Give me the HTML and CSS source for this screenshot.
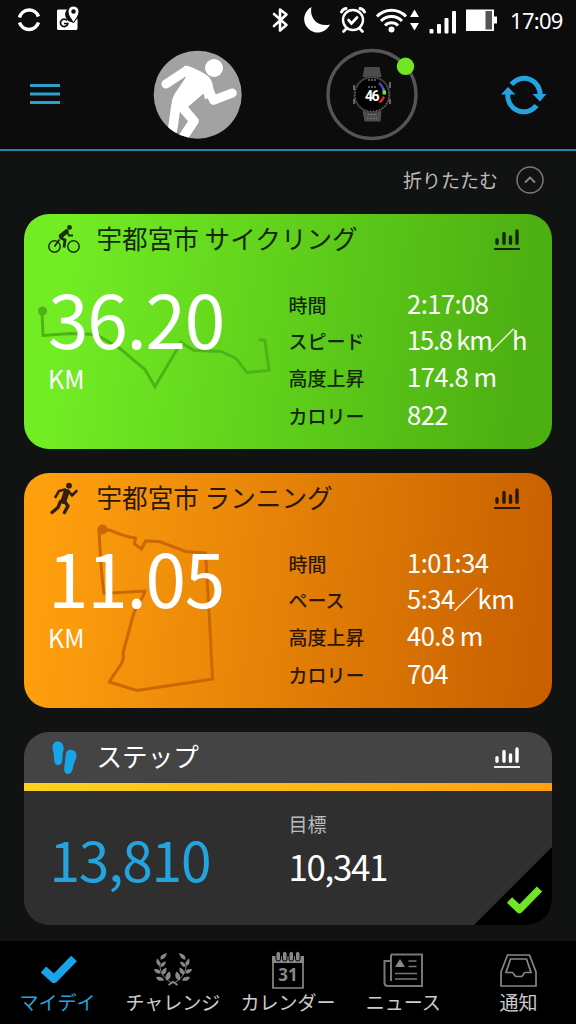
FILE: index.html
```html
<!DOCTYPE html>
<html lang="ja">
<head>
  <meta charset="UTF-8">
  <meta name="viewport" content="width=device-width, initial-scale=1.0"/>
  <title>マイデイ</title>
  <link rel="stylesheet" href="styles.css">
</head>
<body>
  <div class="status-bar">
    <svg class="status-left" width="64" height="32" viewBox="16 4 64 32">
      <path d="M19.500 17.500a10 10 0 0 1 19-1M38.500 22.500a10 10 0 0 1-19 0" fill="none" stroke="#fff" stroke-width="3.500"/>
      <path d="M59 9.500h8a8 8 0 0 0 6 13l4.500-4v10a1.500 1.500 0 0 1-1.500 1.500H58.500a1.500 1.500 0 0 1-1.500-1.500V11a1.500 1.500 0 0 1 2-1.500z" fill="#fff"/>
      <path d="M73.500 23c-2-4-5.500-7-5.500-11.500a5.500 5.500 0 0 1 11 0c0 4.500-3.500 7.500-5.500 11.500z" fill="#fff" stroke="#0c0c0c" stroke-width="1"/>
      <circle cx="73.500" cy="11.500" r="2.200" fill="#0c0c0c"/>
      <path d="M67 20.500a3.700 3.700 0 1 0 .8 3H64" fill="none" stroke="#0c0c0c" stroke-width="1.700"/>
    </svg>
    <svg class="status-right" width="230" height="36" viewBox="268 3 230 36">
      <path d="M273 14l12.500 11-6.500 5.500v-21l6.500 5L273 26" fill="none" stroke="#fff" stroke-width="2.600" stroke-linejoin="round" stroke-linecap="round"/>
      <path d="M310.500 7a13.500 13.500 0 1 0 18.500 17.500c-12 3-21-6.500-18.500-17.500z" fill="#fff"/>
      <g fill="none" stroke="#fff" stroke-width="2.400" stroke-linecap="round">
        <circle cx="352" cy="20" r="10"/>
        <path d="M347.500 20l3 3.500 5.500-6M345.500 28.500l-3 3M358.500 28.500l3 3" stroke-width="2.700"/>
        <path d="M340.500 12a6 6 0 0 1 4.500-3.500M363.500 12a6 6 0 0 0-4.500-3.500" stroke-width="3"/>
      </g>
      <g fill="none" stroke="#fff" stroke-width="3">
        <path d="M376 16.500a20 20 0 0 1 29 0M380 21a14.500 14.500 0 0 1 21 0M384 25.500a9 9 0 0 1 13 0"/>
      </g>
      <circle cx="390.500" cy="29.500" r="3" fill="#fff"/>
      <path d="M413.500 9.500l4.500 7.500h-9zM413.500 30.500l4.500-7.500h-9z" fill="#fff"/>
      <g fill="#fff">
        <rect x="428.500" y="29" width="4" height="4.500" rx="1"/>
        <rect x="436" y="24" width="4" height="9.500" rx="1"/>
        <rect x="443.500" y="18" width="4" height="15.500" rx="1"/>
        <rect x="451" y="11" width="4" height="22.500" rx="1"/>
        <path d="M465 9.500h28v7h3v7h-3V31h-28z"/>
      </g>
      <rect x="484.500" y="11" width="6.500" height="18.500" fill="#555"/>
    </svg>
    <span class="clock">17:09</span>
  </div>

  <header class="top-bar">
    <svg class="menu" width="32" height="24" viewBox="29 82 32 24">
      <path d="M30 85.500h30M30 94h30M30 102.500h30" stroke="#319fce" stroke-width="3"/>
    </svg>
    <svg class="avatar" width="90" height="90" viewBox="153 50 90 90">
      <defs><clipPath id="face"><circle cx="197.700" cy="94.700" r="44"/></clipPath></defs>
      <circle cx="197.700" cy="94.700" r="44" fill="#a2a2a2"/>
      <g clip-path="url(#face)" fill="none" stroke="#fff" stroke-width="9" stroke-linecap="round" stroke-linejoin="round">
        <circle cx="214" cy="68" r="9" fill="#fff" stroke="none"/>
        <path d="M166 84l20.500-13.500"/>
        <path d="M184 66.300c2-.8 4-.5 6 .5 7 2.500 13 5.500 17.500 9 4 3.500 5.500 8 5.700 12.500l.8 8-9 3-1.500-5.800-14.500 12.500-7 8-9.700-13.500c.5-3 1.500-6 4-9l9.700-14.500-4-2z" fill="#fff" stroke="none"/>
        <path d="M209 90l4.500 10.300 18.800-7.300"/>
        <path d="M177 101c-2 7-2.500 19-5 31" stroke-width="9.500"/>
        <path d="M182 107l12 14-12 18" stroke-width="9.500"/>
      </g>
    </svg>
    <svg class="device" width="96" height="96" viewBox="325 47 96 96">
      <circle cx="372" cy="94.500" r="44" fill="none" stroke="#555" stroke-width="3.300"/>
      <path d="M364.500 67h15l2 10h-19zM362.500 111h19l-1 10.500h-16z" fill="#4c4c4c"/>
      <path d="M368 114.500h8M367 118.500h10" stroke="#858585" stroke-width="1" stroke-dasharray="1.500 1.500"/>
      <circle cx="372" cy="94.500" r="18.500" fill="#3a3a3a"/>
      <path d="M354 85v5M354 99v5M390 82v6M390 99v5" stroke="#666" stroke-width="2"/>
      <circle cx="372" cy="94.500" r="16.800" fill="#020202" stroke="#999" stroke-width="1" stroke-dasharray="1 2"/>
      <path d="M368 80h9M368 87h8" stroke="#aaa" stroke-width="1" stroke-dasharray="2 1"/>
      <path d="M379 83a13 13 0 0 1 4 5" fill="none" stroke="#603fc8" stroke-width="2.400"/>
      <path d="M383 88a13 13 0 0 1 1 4" fill="none" stroke="#2785d9" stroke-width="2.400"/>
      <path d="M384.300 90.500v4" stroke="#73e626" stroke-width="3.500"/>
      <path d="M384 96.500a13 13 0 0 1-4.500 6" fill="none" stroke="#d52b25" stroke-width="2.400"/>
      <text x="371.500" y="100.500" class="watch-num">46</text>
      <circle cx="405.500" cy="66.300" r="8.700" fill="#70e624"/>
    </svg>
    <svg class="sync" width="48" height="42" viewBox="500 74 48 42">
      <g fill="none" stroke="#24a3df" stroke-width="5">
        <path d="M511.500 84.500A16 16 0 0 1 540 96"/>
        <path d="M536.500 105.500A16 16 0 0 1 508 93"/>
      </g>
      <path d="M532.500 94h14l-6.500 7.500zM501 94.500h14.500l-7.500-7.500z" fill="#24a3df"/>
    </svg>
  </header>

  <main class="day">
    <div class="collapse">
      <span>折りたたむ</span>
      <svg width="28" height="28" viewBox="0 0 28 28">
        <circle cx="14" cy="14" r="13" fill="none" stroke="#777" stroke-width="1.500"/>
        <path d="M9 16.500l5-5 5 5" fill="none" stroke="#888" stroke-width="1.800"/>
      </svg>
    </div>

    <section class="card cycling">
      <svg class="route" width="528" height="235" viewBox="24 213.500 528 235">
        <circle cx="42.500" cy="310.500" r="4.500" fill="#4eb416"/>
        <path d="M42 311l1 24 28-2 25 1 24 14 25 21 10 17 26-44 13 8 27 1 15 7 11 14 22-2-4-30-6-1" fill="none" stroke="#4eb416" stroke-width="3"/>
      </svg>
      <div class="card-head">
        <svg class="card-icon" width="34" height="30" viewBox="47 223 34 30">
          <circle cx="54.500" cy="245.500" r="5.700" fill="none" stroke="#1a2d0e" stroke-width="1.500"/>
          <circle cx="73.500" cy="245.500" r="5.700" fill="none" stroke="#1a2d0e" stroke-width="1.500"/>
          <circle cx="69.500" cy="226.500" r="2.400" fill="#1a2d0e"/>
          <path d="M61 235l5.500-4.500" fill="none" stroke="#1a2d0e" stroke-width="4.500" stroke-linecap="round"/>
          <path d="M60 236.500l5 2.500-1 7.500" fill="none" stroke="#1a2d0e" stroke-width="2.800"/>
          <path d="M67 231l2 3.500h4M54.500 245.500l5-7" fill="none" stroke="#1a2d0e" stroke-width="1.800"/>
        </svg>
        <h2>宇都宮市 サイクリング</h2>
        <svg class="chart" width="26" height="24" viewBox="0 0 26 24">
          <path d="M3 16.200v-3.500M10 16.200V6.500M16.500 16.200V10M23 16.200V4"/>
          <path d="M0 22h26" class="chart-base"/>
        </svg>
      </div>
      <div class="card-body">
        <div class="distance">
          <div class="big">36.20</div>
          <div class="unit">KM</div>
        </div>
        <dl class="stats">
          <dt>時間</dt><dd>2:17:08</dd>
          <dt>スピード</dt><dd class="speed">15.8 km<span class="slash">／</span>h</dd>
          <dt>高度上昇</dt><dd>174.8 m</dd>
          <dt>カロリー</dt><dd>822</dd>
        </dl>
      </div>
    </section>

    <section class="card running">
      <svg class="route" width="528" height="235" viewBox="24 473 528 235">
        <circle cx="102.500" cy="529.500" r="5" fill="#cb6804"/>
        <path d="M99 529c1 22 2 44 5 64.500l41-2.500c-2 8-10 16-12 25l-10 37c3 10-8 17-13.500 29l27.500 8.500 50-7.500 25.500-4-3-60-4-66-20-1.500-26-10-14-.5-4 8-7-5 1-6c-10-1-19-5-26-8l-10 1" fill="none" stroke="#cb6804" stroke-width="3"/>
      </svg>
      <div class="card-head">
        <svg class="card-icon" width="34" height="34" viewBox="47 480 34 34">
          <circle cx="69" cy="484.700" r="2.900" fill="#30200c"/>
          <g fill="none" stroke="#30200c" stroke-linecap="round" stroke-linejoin="round">
            <path d="M66.500 491l-3 9" stroke-width="6"/>
            <path d="M65 488.500l-6 1.500-3.500 6M68.500 490l3.500 4.500 4.500-4.500" stroke-width="2.600"/>
            <path d="M65 501l3 4-3.500 6.500M60.500 500.500l-2.500 6-6 5" stroke-width="3.400"/>
          </g>
        </svg>
        <h2>宇都宮市 ランニング</h2>
        <svg class="chart" width="26" height="24" viewBox="0 0 26 24">
          <path d="M3 16.200v-3.500M10 16.200V6.500M16.500 16.200V10M23 16.200V4"/>
          <path d="M0 22h26" class="chart-base"/>
        </svg>
      </div>
      <div class="card-body">
        <div class="distance">
          <div class="big">11.05</div>
          <div class="unit">KM</div>
        </div>
        <dl class="stats">
          <dt>時間</dt><dd>1:01:34</dd>
          <dt>ペース</dt><dd>5:34<span class="slash">／</span>km</dd>
          <dt>高度上昇</dt><dd>40.8 m</dd>
          <dt>カロリー</dt><dd>704</dd>
        </dl>
      </div>
    </section>

    <section class="card steps">
      <div class="card-head">
        <svg class="card-icon" width="34" height="34" viewBox="47 740 34 34">
          <path d="M52.500 747c0-7 10-7.500 11 0 .6 4-1.200 5-1 9 .3 3-.2 9-4.200 9s-4.300-4-4.300-8c0-4-1.500-6-1.500-10z" fill="#18a5e8"/>
          <path d="M65.800 754c1-6.500 10.700-5 10.700 1.500 0 4-2.500 6-3 10-.5 3.500-2 8.500-5.500 8.500-4.500-.5-4-5.500-3.500-8.500.8-4 .8-7 1.300-11.500z" fill="#18a5e8"/>
        </svg>
        <h2>ステップ</h2>
        <svg class="chart" width="26" height="24" viewBox="0 0 26 24">
          <path d="M3 16.200v-3.500M10 16.200V6.500M16.500 16.200V10M23 16.200V4"/>
          <path d="M0 22h26" class="chart-base"/>
        </svg>
      </div>
      <div class="progress"></div>
      <div class="steps-body">
        <div class="step-count">13,810</div>
        <div class="goal">
          <div class="goal-label">目標</div>
          <div class="goal-value">10,341</div>
        </div>
      </div>
      <svg class="done" width="78" height="78" viewBox="474 847 78 78">
        <path d="M552 847v78h-78z" fill="#000"/>
        <path d="M509.500 900l10 9.500 20-20.500" fill="none" stroke="#70e624" stroke-width="7.500" stroke-linejoin="round"/>
      </svg>
    </section>
  </main>

  <nav class="tabs">
    <a class="tab active">
      <svg width="40" height="38" viewBox="38 951 40 38">
        <path d="M43.500 969.500l10.500 9.500 20-20.500" fill="none" stroke="#18a5e8" stroke-width="8" stroke-linejoin="round"/>
      </svg>
      <span>マイデイ</span>
    </a>
    <a class="tab">
      <svg width="40" height="38" viewBox="153 951 40 38">
        <defs>
          <g id="branch">
            <path d="M160 962c-1 9 3 16 12 21" fill="none" stroke="#888" stroke-width="1"/>
            <path d="M160.500 959.500c-.5-4 2-5.500 6.500-6.500-1 4-3 6.500-6.500 6.500zM159.500 966c-3.500-2-3.500-4.500-2.500-7.500 2.500 2 4.500 4.500 2.500 7.500zM160.500 967c0-4 2-5 5.500-5.500-.5 3.500-2.500 5.500-5.500 5.500zM160.500 973.500c-4 .5-6-2-6.500-4.500 4 0 6.500.5 6.500 4.500zM162 974.500c-1-4 1.500-6 4.500-7 .5 4-1 7-4.500 7zM164 980.500c-4 1-7 0-8-3.500 4-1 7.500 0 8 3.500zM166 980.500c-1-5 .5-7 3.500-9 2.500 4 1 8-3.500 9z" fill="#888"/>
            <path d="M168.500 985l5-3.500" stroke="#888" stroke-width="2"/>
          </g>
        </defs>
        <use href="#branch"/>
        <use href="#branch" transform="translate(346 0) scale(-1 1)"/>
      </svg>
      <span>チャレンジ</span>
    </a>
    <a class="tab">
      <svg width="40" height="38" viewBox="268 951 40 38">
        <path d="M273 957h30v31h-30z" fill="none" stroke="#888" stroke-width="1.700"/>
        <path d="M272 956h32v7h-32z" fill="#888"/>
        <g fill="#888" stroke="#000" stroke-width="1">
          <rect x="276" y="951.500" width="4.500" height="9.500" rx="2"/>
          <rect x="282.500" y="951.500" width="4.500" height="9.500" rx="2"/>
          <rect x="289" y="951.500" width="4.500" height="9.500" rx="2"/>
          <rect x="295.500" y="951.500" width="4.500" height="9.500" rx="2"/>
        </g>
        <text x="288" y="981" class="cal-num">31</text>
      </svg>
      <span>カレンダー</span>
    </a>
    <a class="tab">
      <svg width="40" height="38" viewBox="383 951 40 38">
        <g fill="none" stroke="#777" stroke-width="2">
          <path d="M391 954.500h31V986h-34c-2 0-3.500-1-3.500-3v-22h6.500v20"/>
          <path d="M391 954.500V981" />
          <path d="M408.500 961h8M408.500 966.500h8M395 973.500h22M395 979h22" stroke-width="1.600"/>
        </g>
        <path d="M395 967l5-8 5 8z" fill="#888"/>
      </svg>
      <span>ニュース</span>
    </a>
    <a class="tab">
      <svg width="40" height="38" viewBox="498 951 40 38">
        <g fill="none" stroke="#888" stroke-width="1.700">
          <path d="M501 972l6.500-17h22l6.500 17v14h-35z"/>
          <path d="M506 972.500l4.500-13.500h16l4.500 13.500h-6c-1.500 0-1.500 4-4 4h-4.500c-2.500 0-2.500-4-4.500-4z"/>
        </g>
      </svg>
      <span>通知</span>
    </a>
  </nav>
</body>
</html>
```

FILE: styles.css
```css
:root {
  --bg-color: #0c0c0c;
  --panel-color: #111212;
  --accent-color: #24a3df;
}

* {
  box-sizing: border-box;
  font-family: 'Noto Sans CJK JP', 'Noto Sans', sans-serif;
}

body {
  margin: 0;
  width: 576px;
  height: 1024px;
  background-color: var(--bg-color);
  color: #ffffff;
  display: flex;
  flex-direction: column;
  overflow: hidden;
}

svg {
  display: block;
  flex: none;
}

.status-bar {
  height: 40px;
  display: flex;
  align-items: flex-start;
  padding: 3px 12px 0 16px;
}

.status-left {
  margin-top: 1px;
}

.status-right {
  margin-left: auto;
}

.clock {
  font-family: 'Noto Sans', sans-serif;
  font-size: 22px;
  line-height: 34px;
  width: 54px;
  margin-left: 11px;
  letter-spacing: -0.7px;
  white-space: nowrap;
}

.top-bar {
  height: 111px;
  border-bottom: 2px solid #2a80a5;
  display: flex;
  align-items: flex-start;
  justify-content: space-between;
  padding: 7px 28px 0 29px;
}

.menu {
  margin-top: 35px;
}

.avatar {
  margin: 3px 0 0 13px;
}

.device {
  margin-left: 3px;
}

.sync {
  margin-top: 27px;
}

.watch-num {
  font-family: 'Roboto', sans-serif;
  font-size: 14px;
  font-weight: bold;
  fill: #ffffff;
  text-anchor: middle;
  letter-spacing: -1.5px;
}

.day {
  background-color: var(--panel-color);
  height: 790px;
  padding: 0 24px;
}

.collapse {
  height: 62.5px;
  display: flex;
  align-items: center;
  justify-content: flex-end;
  gap: 18px;
  padding: 0 8px 5px 0;
  font-size: 19px;
  color: #bbbbbb;
}

.card {
  position: relative;
  height: 235px;
  border-radius: 25px;
  overflow: hidden;
  margin-bottom: 24px;
}

.cycling {
  background: linear-gradient(97deg, #72ed24 8%, #4caf12 94%);
  color: #132808;
}

.running {
  background: linear-gradient(97deg, #ffa00e 4%, #c86000 97%);
  color: #2b1804;
}

.route {
  position: absolute;
  top: 0;
  left: 0;
}

.card-head {
  position: relative;
  display: flex;
  align-items: center;
  height: 51px;
  padding: 0 32px 1px 23px;
}

.card-icon {
  margin-right: 15.5px;
}

.card-head h2 {
  flex: 1;
  margin: 0;
  font-size: 25.6px;
  font-weight: normal;
  line-height: 48px;
  padding-bottom: 2px;
}

.chart path {
  fill: none;
  stroke: currentColor;
  stroke-width: 3.4;
  stroke-linecap: round;
}

.chart .chart-base {
  stroke-width: 1.8;
  stroke-linecap: butt;
}

.card-body {
  position: relative;
  display: flex;
  padding: 21px 0 0 24px;
}

.distance {
  width: 240.5px;
  margin-top: -16px;
  color: #ffffff;
}

.big {
  font-size: 73px;
  line-height: 94px;
  letter-spacing: -1.3px;
}

.unit {
  font-size: 25px;
  line-height: 28px;
}

.stats {
  display: grid;
  grid-template-columns: 118.5px auto;
  grid-template-rows: 37px 35px 39px 37px;
  align-items: center;
  margin: 0;
}

.stats dt {
  font-size: 19px;
  font-weight: 500;
  line-height: 30px;
  padding-top: 1px;
}

.stats dd {
  margin: 0;
  color: #ffffff;
  font-size: 25.5px;
  line-height: 30px;
  padding-bottom: 2px;
  letter-spacing: -0.5px;
  white-space: nowrap;
}

.stats .speed {
  letter-spacing: -1.2px;
}

.slash {
  margin: 0 -1px;
}

.speed .slash {
  margin: 0 -2px;
}

.steps {
  height: 193px;
  background-color: #2f2f2f;
  margin-bottom: 0;
}

.steps .card-head {
  background-color: #444444;
}

.progress {
  height: 8px;
  background: linear-gradient(90deg, #fbd31e, #ffa012);
}

.steps-body {
  display: flex;
  padding: 16px 0 0 25.5px;
}

.step-count {
  width: 239px;
  font-size: 55px;
  line-height: 102px;
  letter-spacing: -1.2px;
  color: var(--accent-color);
}

.goal-label {
  font-size: 19px;
  line-height: 34px;
  color: #bbbbbb;
}

.goal-value {
  font-size: 35px;
  line-height: 50px;
  letter-spacing: -1.4px;
}

.done {
  position: absolute;
  right: 0;
  bottom: 0;
}

.tabs {
  flex: 1;
  display: flex;
  background-color: #000000;
  padding-top: 10px;
}

.tab {
  flex: 1;
  display: flex;
  flex-direction: column;
  align-items: center;
  font-size: 19px;
  line-height: 25px;
  color: #cccccc;
  white-space: nowrap;
}

.tab.active {
  color: var(--accent-color);
}

.cal-num {
  font-family: 'Noto Sans', sans-serif;
  font-size: 17px;
  font-weight: bold;
  fill: #888888;
  text-anchor: middle;
}
```
